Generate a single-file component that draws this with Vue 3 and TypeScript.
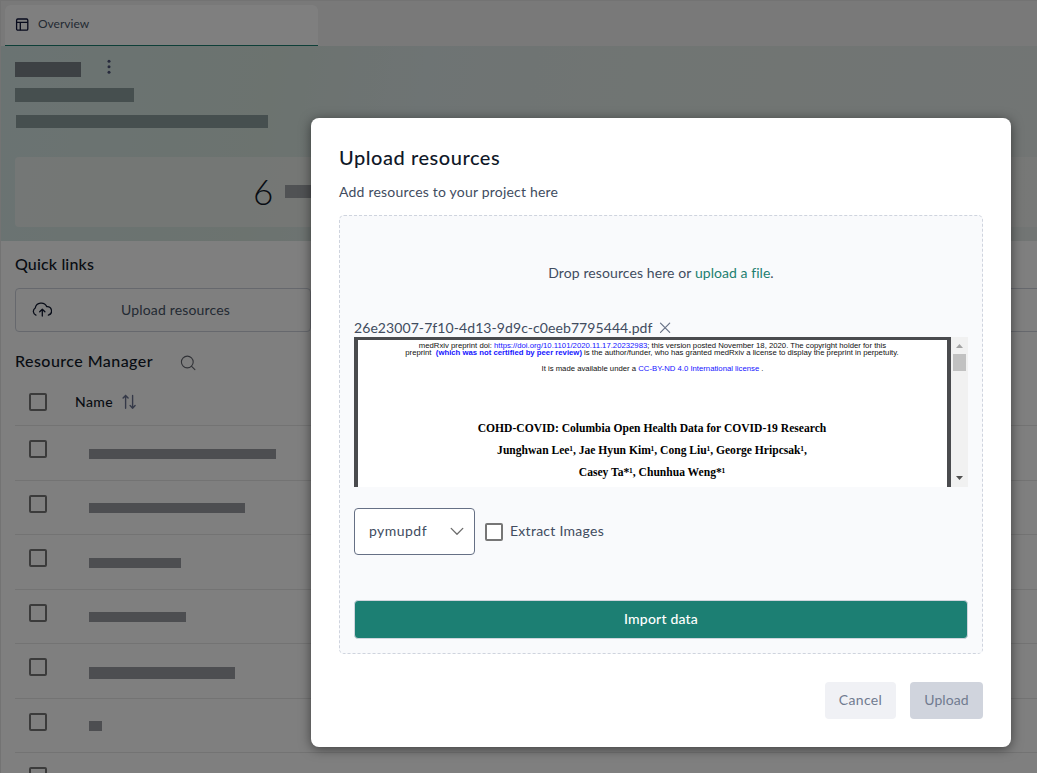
<script setup lang="ts">
import { ref } from 'vue'

interface Resource {
  id: number
  width: number
  height: number
  shift: number
}

const resources: Resource[] = [
  { id: 1, width: 187, height: 10, shift: 23 },
  { id: 2, width: 156, height: 10, shift: 22 },
  { id: 3, width: 92, height: 10, shift: 23 },
  { id: 4, width: 97, height: 10, shift: 22 },
  { id: 5, width: 146, height: 12, shift: 23 },
  { id: 6, width: 13, height: 10, shift: 22 },
  { id: 7, width: 120, height: 10, shift: 23 },
]

const extractor = ref('pymupdf')
const extractImages = ref(false)
</script>

<template>
  <div class="app">
    <div class="page">
      <header class="tabs">
        <div class="tab">
          <svg width="14" height="14" viewBox="0 0 14 14" fill="none" stroke="#10163a" stroke-width="1.3">
            <rect x="1.6" y="1" width="11.2" height="11.2" rx="1.2" />
            <path d="M1.6 4.4H12.8M5.3 4.4V12.2" />
          </svg>
          <span>Overview</span>
        </div>
      </header>

      <section class="banner">
        <div class="title-row">
          <span class="bar project"></span>
          <svg width="4" height="16" viewBox="0 0 4 16" fill="#4f5578">
            <circle cx="2" cy="2.2" r="1.5" /><circle cx="2" cy="7.7" r="1.5" /><circle cx="2" cy="13.2" r="1.5" />
          </svg>
        </div>
        <div class="bar line-a"></div>
        <div class="bar line-b"></div>
        <div class="stats"><span class="count">6</span><span class="bar label"></span></div>
      </section>

      <section class="content">
        <h2 class="quick">Quick links</h2>
        <div class="links">
          <button class="link">
            <svg width="20" height="16" viewBox="0 0 20 16" fill="none" stroke="#10182f" stroke-width="1.3" stroke-linecap="round" stroke-linejoin="round">
              <path d="M3.9 13.2A4.1 4.1 0 0 1 3.2 6A6.2 6.2 0 0 1 14.8 4.6A4.4 4.4 0 0 1 16.4 13.2" />
              <path d="M10.3 14V7.4M7.7 9.8L10.3 7.2L12.9 9.8" />
            </svg>
            <span>Upload resources</span>
          </button>
          <div class="link-rest"></div>
        </div>
        <div class="manager">
          <h2>Resource Manager</h2>
          <svg width="16" height="16" viewBox="0 0 16 16" fill="none" stroke="#63666f" stroke-width="1.1" stroke-linecap="round">
            <circle cx="7.3" cy="7" r="5.9" /><path d="M11.6 11.3L14.9 14.6" />
          </svg>
        </div>
        <div class="table">
          <div class="row head">
            <span class="box"></span>
            <span class="name">Name</span>
            <svg width="16" height="16" viewBox="0 0 16 16" fill="none" stroke="#6a7391" stroke-width="1.4" stroke-linecap="round" stroke-linejoin="round">
              <path d="M4.6 14.2V1.5M2.1 4.1L4.6 1.5L7.1 4.1M11.6 1.5V14.2M9.1 11.6L11.6 14.2L14.1 11.6" />
            </svg>
          </div>
          <div v-for="r in resources" :key="r.id" class="row">
            <span class="box"></span>
            <span class="entry" :style="{ width: r.width + 'px', height: r.height + 'px', marginTop: r.shift + 'px' }"></span>
          </div>
        </div>
      </section>
    </div>

    <div class="overlay">
      <div class="modal">
        <h1>Upload resources</h1>
        <p class="sub">Add resources to your project here</p>
        <div class="dropzone">
          <p class="drop"><span class="hint">Drop resources here or </span><a>upload a file</a>.</p>
          <div class="file">
            <span>26e23007-7f10-4d13-9d9c-c0eeb7795444.pdf</span>
            <svg width="12" height="12" viewBox="0 0 12 12" stroke="#667085" stroke-width="1.2" stroke-linecap="round">
              <path d="M1.5 1.2L10.7 10.4M10.7 1.2L1.5 10.4" />
            </svg>
          </div>
          <div class="viewer">
            <div class="sheet">
              <p class="note first">medRxiv preprint doi: <b class="url">https://doi.org/10.1101/2020.11.17.20232983</b>; this version posted November 18, 2020. The copyright holder for this</p>
              <p class="note second">preprint&nbsp; <b>(which was not certified by peer review)</b> is the author/funder, who has granted medRxiv a license to display the preprint in perpetuity.</p>
              <p class="note third">It is made available under a <b class="url">CC-BY-ND 4.0 International license</b> .</p>
              <div class="paper">
                <p>COHD-COVID: Columbia Open Health Data for COVID-19 Research</p>
                <p>Junghwan Lee¹, Jae Hyun Kim¹, Cong Liu¹, George Hripcsak¹,</p>
                <p>Casey Ta*¹, Chunhua Weng*¹</p>
              </div>
            </div>
            <div class="scroll">
              <svg width="7" height="4" viewBox="0 0 7 4"><path d="M0 4L3.5 0L7 4Z" fill="#a3a3a3" /></svg>
              <span class="thumb"></span>
              <svg class="down" width="7" height="4" viewBox="0 0 7 4"><path d="M0 0L3.5 4L7 0Z" fill="#505050" /></svg>
            </div>
          </div>
          <div class="options">
            <div class="select">
              <span>{{ extractor }}</span>
              <svg width="14" height="9" viewBox="0 0 14 9" fill="none" stroke="#6b6b6b" stroke-width="1.3" stroke-linecap="round" stroke-linejoin="round">
                <path d="M1.2 1.4L7 7.2L12.8 1.4" />
              </svg>
            </div>
            <span class="box" role="checkbox" :aria-checked="extractImages" @click="extractImages = !extractImages"></span>
            <span class="check-label">Extract Images</span>
          </div>
          <button class="import">Import data</button>
        </div>
        <div class="actions">
          <button class="cancel">Cancel</button>
          <button class="upload">Upload</button>
        </div>
      </div>
    </div>
  </div>
</template>

<style>
html, body { overflow: hidden; }
</style>

<style scoped>
* { box-sizing: border-box; }
h1, h2, p { margin: 0; font-weight: 500; }
svg { display: block; flex: none; }
button { font: inherit; cursor: pointer; }
.app { position: relative; width: 1037px; height: 773px; overflow: hidden; background: #fff; font-family: Lato, "Open Sans", sans-serif; font-size: 14px; color: #414c60; }
.page { height: 773px; border-top: 1px solid #e6e6e6; border-left: 1px solid #e6e6e6; overflow: hidden; }
.tabs { height: 45px; background: #f3f3f3; padding: 4px 0 0 4px; }
.tab { width: 313px; height: 41px; display: flex; align-items: flex-start; gap: 9px; padding: 13px 0 0 10px; background: #fff; border-radius: 6px 6px 0 0; border-bottom: 1px solid #1c7f70; font-size: 12px; color: #475467; }
.tab span { line-height: 16px; margin-top: -2px; }
.banner { height: 195px; padding-left: 14px; background: linear-gradient(100deg, #d5e7e5 0%, #d8e6df 26%, #dde8e8 40%, #e1eae6 60%, #e4ebe9 100%); overflow: hidden; }
.bar { display: block; background: #8d9e9f; }
.title-row { display: flex; padding-top: 13px; gap: 26px; height: 42px; }
.project { width: 66px; height: 15px; margin-top: 3px; background: #7b8389; }
.line-a { width: 119px; height: 14px; }
.line-b { width: 252px; height: 13px; margin: 13px 0 0 1px; }
.stats { height: 70px; margin-top: 29px; padding-left: 238px; display: flex; align-items: center; background: rgba(243, 243, 241, .62); border-radius: 4px 0 0 4px; color: #101828; }
.count { width: 32px; font-size: 35px; font-weight: 300; line-height: 40px; margin-top: -2px; }
.label { width: 120px; height: 13px; background: #a0a5a9; margin-top: -1px; }
.content { padding-left: 14px; }
h2 { font-size: 16px; line-height: 20px; color: #101828; }
.quick { padding-top: 13px; height: 47px; letter-spacing: .15px; }
.links { display: flex; gap: 10px; }
.link { width: 296px; height: 44px; border: 1px solid #cdd1db; border-radius: 4px; background: none; display: flex; align-items: center; padding: 0 0 0 16px; color: #475467; }
.link svg { margin-top: -1px; }
.link span { margin: -2px 0 0 69px; letter-spacing: .16px; }
.link-rest { flex: 1; border: solid #cdd1db; border-width: 1px 0 1px 1px; }
.manager { display: flex; height: 46px; padding-top: 19px; }
.manager h2 { letter-spacing: .45px; width: 165px; }
.manager svg { margin-top: 4px; }
.row { display: flex; align-items: flex-start; height: 54px; border-bottom: 1px solid #e7e7e7; padding-left: 14px; }
.row:nth-child(even) { height: 55px; }
.row.head { height: 48px; }
.row > .box { margin-top: 14px; }
.head > .box { margin-top: 15px; }
.box { display: block; flex: none; width: 18px; height: 18px; border: 2px solid #767676; border-radius: 2px; background: #fff; }
.name { font-weight: 500; color: #101828; letter-spacing: .38px; margin: 15px 0 0 28px; line-height: 18px; width: 46px; }
.head svg { margin: 16px 0 0; }
.entry { margin-left: 42px; background: #9b9ca3; }

.overlay { position: absolute; inset: 0; background: rgba(0, 0, 0, .5); display: flex; padding: 118px 0 0 311px; }
.modal { width: 700px; height: 629px; background: #fff; border-radius: 8px; padding: 27px 28px 28px; box-shadow: 0 2px 12px rgba(0, 0, 0, .5); }
h1 { font-size: 20px; line-height: 24px; color: #101828; letter-spacing: .54px; }
.sub { margin-top: 14px; line-height: 18px; letter-spacing: .2px; font-weight: 400; }
.dropzone { margin-top: 14px; height: 439px; border: 1px dashed #cfd4de; border-radius: 5px; background: #f9fafc; padding: 0 14px; }
.drop { padding-top: 48px; line-height: 18px; text-align: center; font-weight: 400; letter-spacing: .1px; white-space: pre; }
.drop a { color: #1c7f70; letter-spacing: .05px; }
.file { display: flex; align-items: center; gap: 6px; margin-top: 36px; height: 19px; letter-spacing: .08px; }
.viewer { display: flex; height: 150px; }
.sheet { width: 597px; border: solid #4a4b4e; border-width: 3px 4px 0; background: #fff; color: #111; text-align: center; white-space: nowrap; overflow: hidden; }
.note { font: 400 7.74px/8px "Liberation Sans", Arial, sans-serif; }
.note b { color: #1414ff; }
.note .url { font-weight: 400; }
.first { margin-top: 2px; margin-left: 0; }
.second { margin-top: -1px; margin-left: -1px; }
.third { margin-top: 8px; margin-left: 0; }
.paper { margin: 45px 0 0 -1px; font: bold 11.58px/22px "Liberation Serif", "Times New Roman", serif; color: #000; }
.paper p { font-weight: bold; }
.scroll { width: 17px; background: #f1f1f1; display: flex; flex-direction: column; align-items: center; padding: 7px 0; }
.thumb { width: 13px; height: 17px; margin-top: 6px; background: #c1c1c1; }
.down { margin-top: auto; }
.options { display: flex; align-items: center; margin-top: 21px; height: 47px; }
.select { width: 121px; height: 47px; display: flex; align-items: center; justify-content: space-between; padding: 0 10px 0 14px; border: 1px solid #667085; border-radius: 4px; background: #fff; letter-spacing: .46px; }
.select span { margin-top: -2px; }
.options > .box { margin: 1px 7px 0 10px; }
.check-label { letter-spacing: .27px; margin-top: -2px; }
.import { display: block; width: 614px; height: 39px; margin-top: 45px; padding: 0 0 2px; border: 1px solid #d0d5dd; border-radius: 4px; background: #1c7f73; color: #fff; font-weight: 500; letter-spacing: .2px; }
.actions { display: flex; justify-content: flex-end; gap: 14px; margin-top: 28px; }
.actions button { height: 37px; border: 0; border-radius: 4px; padding: 0 0 2px; color: #717b90; }
.cancel { width: 71px; background: #f0f1f5; letter-spacing: .35px; }
.upload { width: 73px; background: #d0d4dd; letter-spacing: .09px; }
</style>
